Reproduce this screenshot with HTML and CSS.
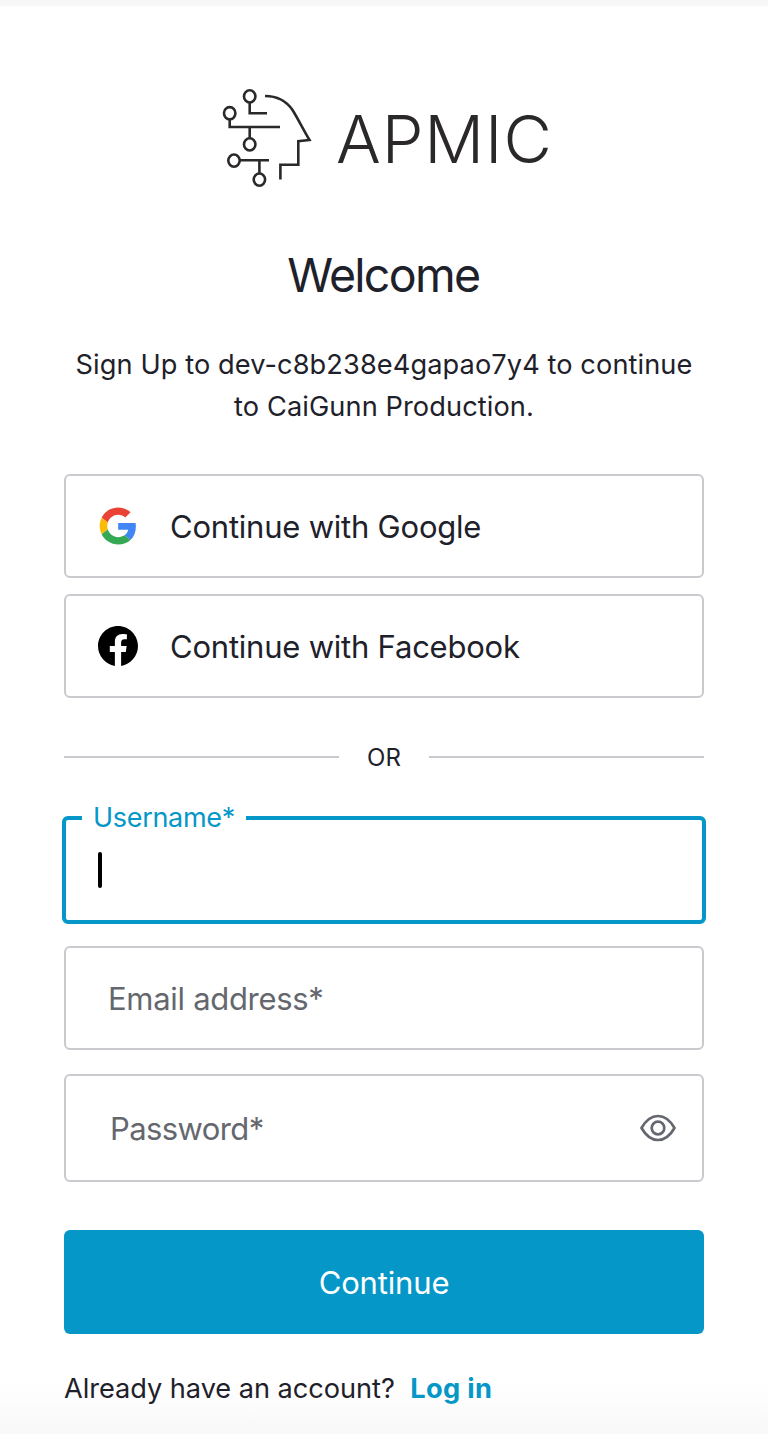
FILE: index.html
```html
<!DOCTYPE html>
<html lang="en">
<head>
<meta charset="utf-8">
<title>Welcome</title>
<link rel="stylesheet" href="styles.css">
</head>
<body>
<main class="card">
  <div class="logo">
    <svg class="logo-mark" viewBox="220 86 94 104" width="94" height="104" aria-hidden="true">
      <g fill="none" stroke="#2b2829" stroke-width="2.600">
        <ellipse cx="249.7" cy="96.4" rx="5.7" ry="6.1"/>
        <ellipse cx="229.7" cy="113.2" rx="5.7" ry="6.1"/>
        <ellipse cx="249.7" cy="144.4" rx="5.7" ry="6.1"/>
        <ellipse cx="234" cy="160.6" rx="5.7" ry="6.1"/>
        <ellipse cx="259.4" cy="179.6" rx="5.7" ry="6.1"/>
        <path d="M249.7 102.5V113.2H267M229.7 119.3V127H280M249.7 127V138.3M239.7 160.2H269M259.4 160.2V173.5"/>
        <path d="M265 96C277 96 286 100.5 292.5 110C297 117 303 129 309.5 140L298.3 141.2V164.8H280.4V179.5"/>
      </g>
    </svg>
    <span class="logo-word">APMIC</span>
  </div>
  <h1 class="title">Welcome</h1>
  <p class="intro">Sign Up to dev-c8b238e4gapao7y4 to continue<br>to CaiGunn Production.</p>
  <div class="social">
    <button class="provider" type="button">
      <svg class="provider-icon" viewBox="0 0 40 40" aria-hidden="true">
        <g transform="translate(1.7 1.5) scale(.77)">
        <path fill="#EA4335" d="M24 9.5c3.54 0 6.71 1.22 9.21 3.6l6.85-6.85C35.9 2.38 30.47 0 24 0 14.62 0 6.51 5.38 2.56 13.22l7.98 6.19C12.43 13.72 17.74 9.5 24 9.5z"/>
        <path fill="#4285F4" d="M46.98 24.55c0-1.57-.15-3.09-.38-4.55H24v9.02h12.94c-.58 2.96-2.26 5.48-4.78 7.18l7.73 6c4.51-4.18 7.09-10.36 7.09-17.65z"/>
        <path fill="#FBBC05" d="M10.53 28.59c-.48-1.45-.76-2.99-.76-4.59s.27-3.14.76-4.59l-7.98-6.19C.92 16.46 0 20.12 0 24c0 3.88.92 7.54 2.56 10.78l7.97-6.19z"/>
        <path fill="#34A853" d="M24 48c6.48 0 11.93-2.13 15.89-5.81l-7.73-6c-2.15 1.45-4.92 2.3-8.16 2.3-6.26 0-11.57-4.22-13.47-9.91l-7.98 6.19C6.51 42.62 14.62 48 24 48z"/>
        </g>
      </svg>
      <span>Continue with Google</span>
    </button>
    <button class="provider" type="button">
      <svg class="provider-icon" viewBox="0 0 24 24" aria-hidden="true">
        <path d="M24 12.073C24 5.446 18.627 0 12 0S0 5.446 0 12.073c0 5.99 4.388 10.954 10.125 11.854v-8.385H7.078v-3.47h3.047V9.43c0-3.007 1.792-4.669 4.533-4.669 1.312 0 2.686.235 2.686.235v2.953H15.83c-1.491 0-1.956.925-1.956 1.874v2.25h3.328l-.532 3.47h-2.796v8.385C19.612 23.027 24 18.062 24 12.073z"/>
      </svg>
      <span>Continue with Facebook</span>
    </button>
  </div>
  <div class="divider"><span>OR</span></div>
  <form class="fields">
    <div class="field focused"><span class="float-label">Username*</span><span class="caret"></span></div>
    <div class="field email"><span>Email address*</span></div>
    <div class="field password"><span>Password*</span>
      <svg class="eye" viewBox="0 0 36 28" aria-hidden="true">
        <g fill="none" stroke="#65676e" stroke-width="2.700" stroke-linejoin="round">
          <path d="M1.5 14C5.5 7 11 2 18 2S30.500 7 34.500 14C30.500 21 25 26 18 26S5.500 21 1.500 14Z"/>
          <circle cx="18" cy="14" r="6.300"/>
        </g>
      </svg>
    </div>
  </form>
  <button class="submit" type="button">Continue</button>
  <p class="switch"><span>Already have an account?</span> <a class="login" href="#">Log in</a></p>
</main>
</body>
</html>
```
FILE: styles.css
```css
* { box-sizing: border-box; }
body {
  margin: 0;
  height: 1434px;
  overflow: hidden;
  border-top: 6px solid #f7f7f7;
  background: linear-gradient(#fff 0, #fff 1382px, #f9f9f9 1428px);
  color: #1e212a;
  font-family: Inter, "Liberation Sans", sans-serif;
}
.card { padding: 80px 64px 0; }
.logo { display: flex; height: 104px; margin-left: 156px; }
.logo-mark { flex: none; }
.logo-word { margin-left: 22px; font-size: 66.5px; font-weight: 300; letter-spacing: .9px; line-height: 107px; color: #2b2829; }
.title { margin: 50px 0 0; text-align: center; font-size: 46.5px; font-weight: 400; letter-spacing: -1.7px; text-indent: -1.5px; line-height: 71px; }
.intro { margin: 33px 0 0; text-align: center; font-size: 27.2px; letter-spacing: .09px; line-height: 42px; white-space: nowrap; }
.social { display: grid; gap: 16px; margin-top: 46px; }
.provider {
  display: flex; align-items: center; gap: 32px;
  height: 104px; padding: 0 32px;
  border: 2px solid #c9cace; border-radius: 6px;
  background: #fff; color: inherit; font: 31px Inter, sans-serif; letter-spacing: -.22px; text-align: left;
}
.provider-icon { width: 40px; height: 40px; flex: none; }
.divider { display: flex; align-items: center; justify-content: center; height: 30px; margin-top: 44px; font-size: 24px; font-weight: 400; }
.divider::before, .divider::after { content: ""; width: 275px; height: 2px; background: #c9cace; }
.divider span { width: 90px; text-align: center; }
.fields { margin-top: 44px; }
.field {
  position: relative; display: flex; align-items: center; height: 104px;
  border: 2px solid #c9cace; border-radius: 6px; padding: 0 26px 0 42px;
  color: #65676e; font-size: 31px; letter-spacing: -.3px;
}
.focused { height: 108px; margin: 0 -2px; border: 4px solid #0497c7; padding: 0 32px; }
.float-label { position: absolute; left: 16px; top: -18px; padding: 0 11px; background: #fff; color: #0497c7; font-size: 27px; line-height: 32px; }
.caret { width: 4px; height: 36px; border-radius: 2px; background: #000; }
.email { margin-top: 22px; }
.password { justify-content: space-between; height: 108px; margin-top: 24px; padding-left: 44px; letter-spacing: -.6px; }
.eye { width: 36px; height: 28px; }
.submit {
  display: block; width: 100%; height: 104px; margin-top: 48px; border: 0; border-radius: 6px;
  background: #0497c7; color: #fff; font: 31px Inter, sans-serif; letter-spacing: -.15px;
}
.switch { margin: 38px 0 0; font-size: 27.2px; letter-spacing: -.05px; line-height: 34px; white-space: nowrap; }
.login { margin-left: 8px; color: #0497c7; font-weight: 700; letter-spacing: .3px; text-decoration: none; }
```
